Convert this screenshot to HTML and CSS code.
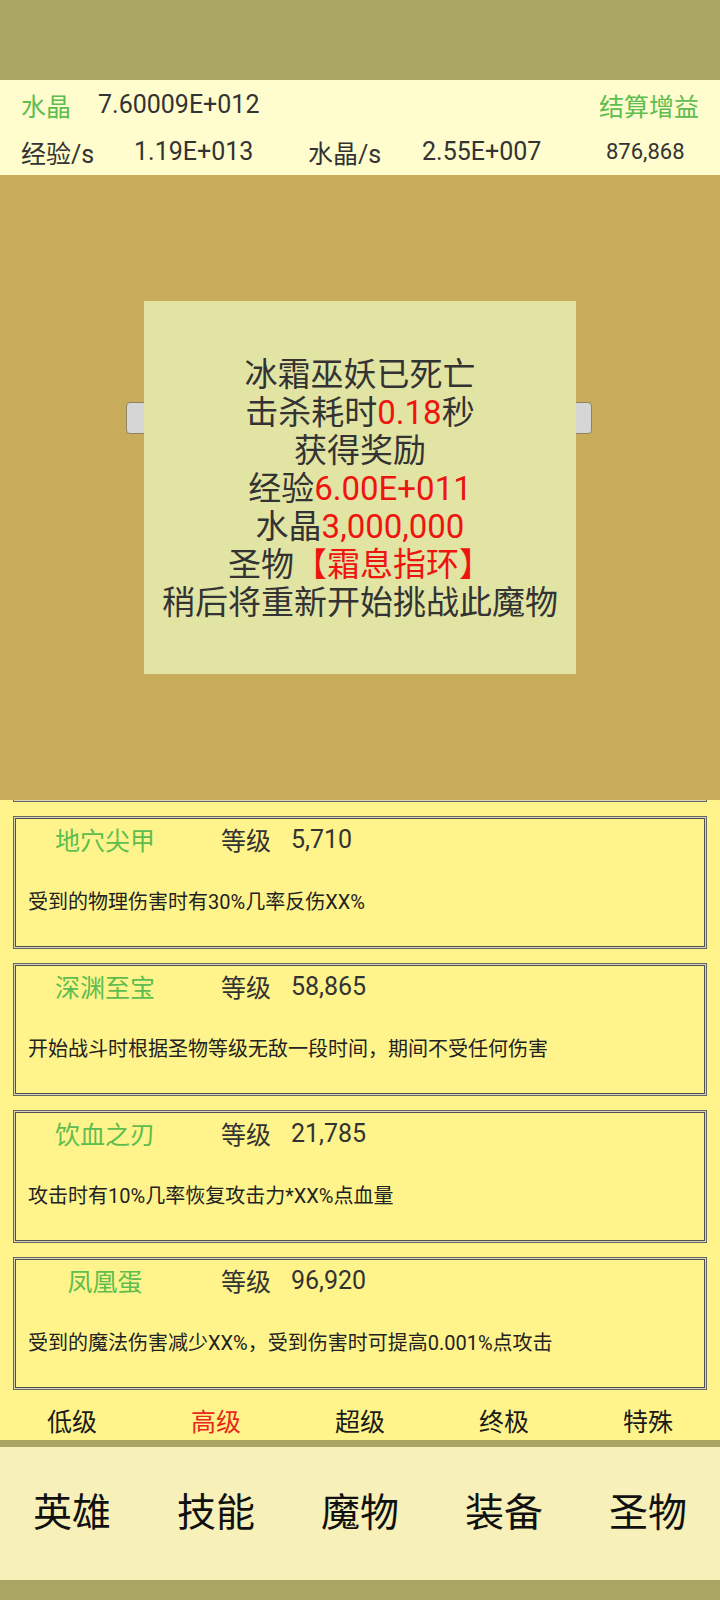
FILE: index.html
```html
<html>
<head>
<meta charset="utf-8">
<title>圣物</title>
<link rel="stylesheet" href="styles.css">
</head>
<body>

<div class="topBar"></div>

<div class="header">
	<div class="row">
		<span class="lbl green">水晶</span>
		<span class="val">7.60009E+012</span>
		<span class="gain green">结算增益</span>
	</div>
	<div class="row">
		<span class="c1">经验/s</span>
		<span class="c2">1.19E+013</span>
		<span class="c3">水晶/s</span>
		<span class="c4">2.55E+007</span>
		<span class="c5">876,868</span>
	</div>
</div>

<div class="stage">
	<div class="btnRow">
		<div class="btn"></div>
		<div class="btn"></div>
	</div>
	<div class="dialog">
		<div>冰霜巫妖已死亡</div>
		<div>击杀耗时<span class="red">0.18</span>秒</div>
		<div>获得奖励</div>
		<div>经验<span class="red">6.00E+011</span></div>
		<div>水晶<span class="red">3,000,000</span></div>
		<div>圣物<span class="red">【霜息指环】</span></div>
		<div>稍后将重新开始挑战此魔物</div>
	</div>
</div>

<div class="list">
	<div class="card first"></div>
	<div class="card">
		<div class="title"><span class="name">地穴尖甲</span><span class="lv">等级</span><span class="num">5,710</span></div>
		<div class="desc">受到的物理伤害时有30%几率反伤XX%</div>
	</div>
	<div class="card">
		<div class="title"><span class="name">深渊至宝</span><span class="lv">等级</span><span class="num">58,865</span></div>
		<div class="desc">开始战斗时根据圣物等级无敌一段时间，期间不受任何伤害</div>
	</div>
	<div class="card">
		<div class="title"><span class="name">饮血之刃</span><span class="lv">等级</span><span class="num">21,785</span></div>
		<div class="desc">攻击时有10%几率恢复攻击力*XX%点血量</div>
	</div>
	<div class="card">
		<div class="title"><span class="name">凤凰蛋</span><span class="lv">等级</span><span class="num">96,920</span></div>
		<div class="desc">受到的魔法伤害减少XX%，受到伤害时可提高0.001%点攻击</div>
	</div>
	<div class="card"></div>
</div>

<div class="tabs">
	<div>低级</div>
	<div class="red">高级</div>
	<div>超级</div>
	<div>终极</div>
	<div>特殊</div>
</div>

<div class="strip"></div>

<div class="nav">
	<div>英雄</div>
	<div>技能</div>
	<div>魔物</div>
	<div>装备</div>
	<div>圣物</div>
</div>

<div class="bottomBar"></div>

</body>
</html>
```

FILE: styles.css
```css
body {
    margin: 0;
    width: 720px;
    font-family: "Roboto", "Noto Sans CJK SC", sans-serif;
    color: #333;
}
.green {
    color: #5dbd4f;
}
.red {
    color: #ee1410;
}
.topBar {
    height: 80px;
    background-color: #a9a563;
}
.header {
    height: 95px;
    background-color: #fffccd;
    padding: 1px 21px 0;
    box-sizing: border-box;
    font-size: 25px;
}
.header .row {
    display: flex;
    align-items: center;
    height: 47px;
}
.header .lbl {
    width: 77px;
}
.header .gain {
    margin-left: auto;
}
.header .c1 { width: 113px; }
.header .c2 { width: 174px; }
.header .c3 { width: 114px; }
.header .c4 { width: 184px; }
.header .c5 { font-size: 22px; }

.stage {
    position: relative;
    height: 625px;
    background-color: #c8ac5b;
}
.btnRow {
    display: flex;
    justify-content: space-between;
    padding: 227px 128px 0 126px;
}
.btn {
    width: 200px;
    height: 30px;
    background-color: #d6d6d6;
    border: 1px solid #8d8460;
    border-radius: 4px;
}
.dialog {
    position: absolute;
    top: 126px;
    left: 144px;
    width: 432px;
    height: 373px;
    padding-top: 2px;
    box-sizing: border-box;
    background-color: #e2e4a3;
    display: flex;
    flex-direction: column;
    justify-content: center;
    text-align: center;
    font-size: 33px;
    line-height: 38px;
}

.list {
    height: 600px;
    overflow: hidden;
    background-color: #fff48b;
    padding: 0 13px;
}
.card {
    height: 133px;
    box-sizing: border-box;
    margin-bottom: 14px;
    border: 1px solid #666;
    box-shadow: inset 0 0 0 1px #d9d6b8, inset 0 0 0 2px #505050;
    padding: 2px;
}
.card.first {
    margin-top: -131px;
}
.title {
    display: flex;
    align-items: center;
    height: 40px;
    font-size: 25px;
}
.title .name {
    width: 178px;
    text-align: center;
    color: #5dbd4f;
}
.title .lv {
    margin-left: 27px;
    width: 70px;
}
.desc {
    margin-top: 28px;
    padding-left: 12px;
    font-size: 20px;
    line-height: 30px;
    color: #222;
}

.tabs {
    display: flex;
    height: 40px;
    background-color: #fff48b;
    font-size: 25px;
    color: #1a1a1a;
}
.tabs div {
    flex: 1;
    text-align: center;
    line-height: 46px;
}
.tabs .red {
    color: #e8281e;
}
.strip {
    height: 7px;
    background-color: #a9a563;
}
.nav {
    display: flex;
    height: 133px;
    background-color: #f7f0b8;
    font-size: 39px;
    color: #111;
}
.nav div {
    flex: 1;
    text-align: center;
    line-height: 132px;
}
.bottomBar {
    height: 20px;
    background-color: #a9a563;
}
```
